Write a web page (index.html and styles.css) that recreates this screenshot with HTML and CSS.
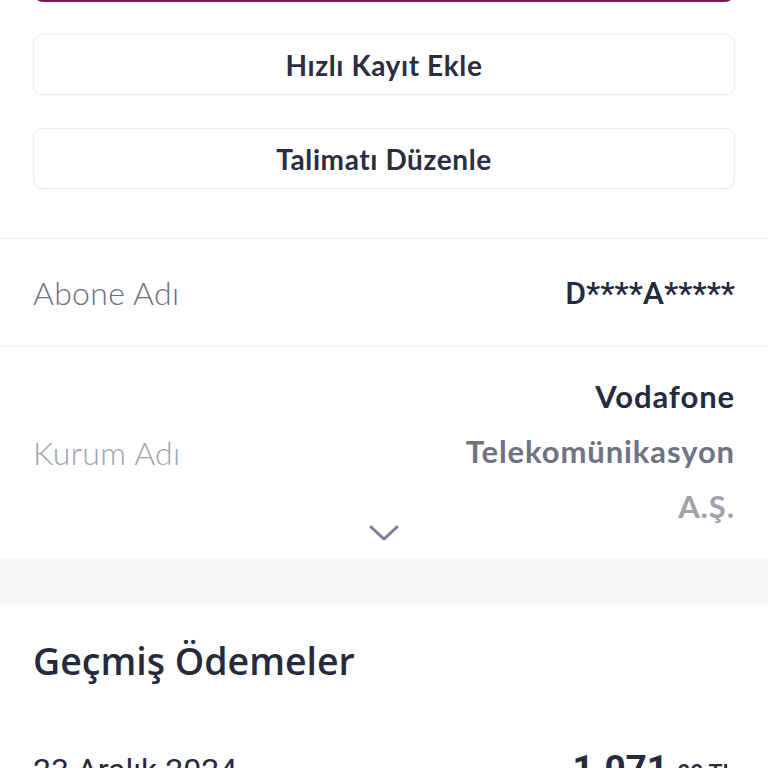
FILE: index.html
```html
<!DOCTYPE html>
<html lang="tr">
<head>
<meta charset="utf-8">
<link rel="stylesheet" href="styles.css">
</head>
<body>
<div class="actions">
  <div class="primary-btn"></div>
  <button class="btn">Hızlı Kayıt Ekle</button>
  <button class="btn">Talimatı Düzenle</button>
</div>
<div class="info">
  <div class="row row-abone">
    <span class="label">Abone Adı</span>
    <span class="value-mask">D****A*****</span>
  </div>
  <div class="row row-kurum">
    <span class="label label-light">Kurum Adı</span>
    <div class="value-multi">
      <span class="l1">Vodafone</span>
      <span class="l2">Telekomünikasyon</span>
      <span class="l3">A.Ş.</span>
    </div>
    <svg class="chevron" width="30" height="18" viewBox="0 0 30 18"><path d="M2 3 L15 15 L28 3" fill="none" stroke="#7b7e93" stroke-width="3" stroke-linecap="round" stroke-linejoin="round"/></svg>
  </div>
</div>
<div class="band"></div>
<div class="history">
  <h2 class="history-title">Geçmiş Ödemeler</h2>
  <div class="pay-row">
    <span class="pay-date">23 Aralık 2024</span>
    <span class="pay-amount"><b>1.071</b><small>,00 TL</small></span>
  </div>
</div>
</body>
</html>
```
FILE: styles.css
```css
* { box-sizing: border-box; }
html, body { margin: 0; padding: 0; background: #fff; }
body { width: 768px; height: 768px; overflow: hidden; color: #262a3d; font-family: "Lato", sans-serif; }

.actions {
  display: flex;
  flex-direction: column;
  padding: 0 33px 49px;
  gap: 33px;
  border-bottom: 1px solid #ededf0;
}
.primary-btn {
  height: 56px;
  margin-top: -54px;
  margin-bottom: -1px;
  background: #7a1462;
  border-radius: 10px;
}
.btn {
  height: 61px;
  background: #fff;
  border: 1px solid #ececef;
  border-radius: 10px;
  font-family: "Lato", sans-serif;
  font-weight: 700;
  font-size: 28px;
  letter-spacing: 0.6px;
  color: #2a2e40;
  box-shadow: 0 1px 2px rgba(0,0,0,0.03);
}

.row {
  display: flex;
  justify-content: space-between;
  align-items: center;
  padding: 0 33px;
}
.row-abone {
  height: 108px;
  border-bottom: 1px solid #ededf0;
}
.label {
  font-family: "Lato", sans-serif;
  font-weight: 300;
  font-size: 32px;
  letter-spacing: 0.3px;
  color: #6c6f7d;
}
.label-light {
  color: #a0a2ad;
}
.value-mask {
  font-family: "Roboto", sans-serif;
  font-weight: 500;
  font-size: 32px;
  color: #262a3d;
}
.row-kurum {
  position: relative;
  height: 211px;
  align-items: center;
}
.value-multi {
  display: flex;
  flex-direction: column;
  align-items: flex-end;
  font-weight: 700;
  font-size: 31px;
  letter-spacing: 0.9px;
  line-height: 55px;
  margin-top: -3px;
}
.l1 { color: #262a3d; }
.l2 { color: #6f7283; }
.l3 { color: #9fa1ad; }
.chevron {
  position: absolute;
  left: 369px;
  top: 177px;
}

.band { height: 46px; background: #f7f8fa; }

.history { padding: 0 33px; }
.history-title {
  margin: 0;
  padding-top: 32px;
  height: 116px;
  font-family: "Open Sans", sans-serif;
  font-weight: 600;
  font-size: 37.5px;
  line-height: 50px;
  color: #262a3d;
}
.pay-row {
  display: flex;
  justify-content: space-between;
  align-items: baseline;
  padding-top: 27px;
}
.pay-date {
  font-family: "Roboto", sans-serif;
  font-size: 32px;
  color: #262a3d;
}
.pay-amount b {
  font-family: "Roboto", sans-serif;
  font-weight: 700;
  font-size: 37px;
}
.pay-amount small {
  font-family: "Roboto", sans-serif;
  font-weight: 500;
  font-size: 23px;
  margin-left: 4px;
}
```
